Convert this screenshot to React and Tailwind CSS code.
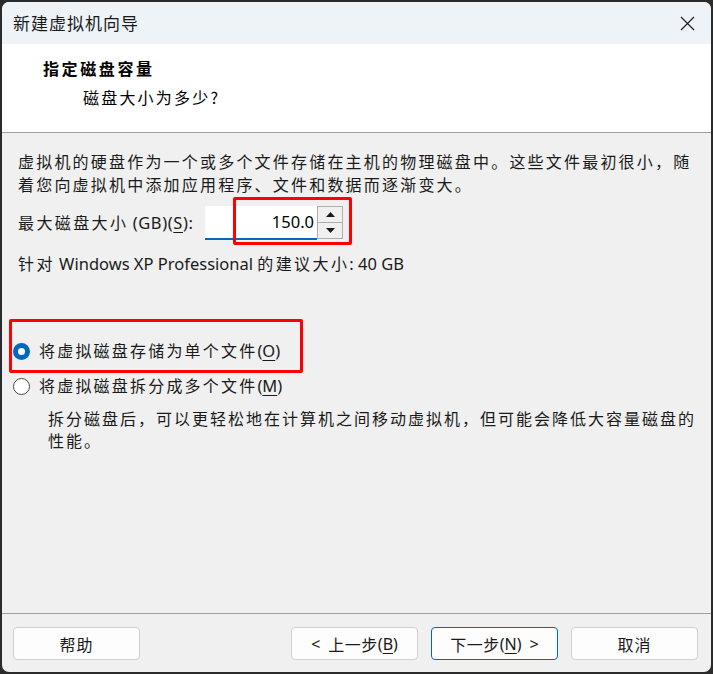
import React from "react";

const cjk = "font-['Noto_Sans_CJK_SC',sans-serif]";
const latin = "font-['Noto_Sans','Noto_Sans_CJK_SC',sans-serif]";

function Cjk({ children, className = "" }) {
  return <span className={`tracking-[2.4px] ${className}`}>{children}</span>;
}

function CloseIcon() {
  return (
    <svg width="15" height="15" viewBox="0 0 15 15" fill="none">
      <path d="M1 1L14 14M14 1L1 14" stroke="#1a1a1a" strokeWidth="1.1" />
    </svg>
  );
}

function Radio({ checked }) {
  if (checked) {
    return (
      <span className="w-[17px] h-[17px] rounded-full bg-[#0067c0] flex items-center justify-center shrink-0">
        <span className="w-[7px] h-[7px] rounded-full bg-white" />
      </span>
    );
  }
  return (
    <span className="w-[17px] h-[17px] rounded-full bg-white border border-[#4a4a4a] shrink-0" />
  );
}

function DialogButton({ children, primary }) {
  return (
    <button
      type="button"
      className={`w-[127px] h-[33px] rounded-[4px] bg-[#fdfdfd] border text-[16px] text-[#1a1a1a] flex items-center justify-center ${
        primary ? "border-[#0067c0]" : "border-[#d0d0d0]"
      }`}
    >
      {children}
    </button>
  );
}

export default function App() {
  return (
    <div className={`w-[713px] h-[674px] bg-[#2b2b2b] p-[2px] ${cjk}`}>
      <div className="h-full rounded-[7px] overflow-hidden flex flex-col bg-[#f0f0f0] text-[#1a1a1a]">
        {/* title bar */}
        <div className="h-[42px] bg-[#eef3f8] flex items-center justify-between pl-[11px] pr-[16px]">
          <span className="text-[17px] tracking-[1px]">新建虚拟机向导</span>
          <CloseIcon />
        </div>

        {/* header */}
        <div className="h-[89px] bg-white pl-[41px] pt-[12px] border-b border-[#a0a0a0]">
          <div className="text-[16px] leading-[24px] font-bold tracking-[2.6px] text-black">
            指定磁盘容量
          </div>
          <div className="mt-[5px] ml-[40px] text-[16px] leading-[24px] tracking-[2.2px] text-black">
            磁盘大小为多少?
          </div>
        </div>

        {/* body */}
        <div className="flex-1 px-[16px] pt-[17px] text-[16px] whitespace-nowrap">
          <p className="leading-[23px] tracking-[2.2px]">
            虚拟机的硬盘作为一个或多个文件存储在主机的物理磁盘中。这些文件最初很小，随
            <br />
            着您向虚拟机中添加应用程序、文件和数据而逐渐变大。
          </p>

          <div className="relative mt-[10px] flex items-center h-[34px]">
            <span className={`w-[187px] text-[16.5px] ${latin}`}>
              <Cjk className={`text-[16px] ${cjk}`}>最大磁盘大小</Cjk>{" "}
              <span className="tracking-[0.6px]">(GB)(<span className="underline underline-offset-[3px]">S</span>):</span>
            </span>
            <div className={`w-[112px] h-[34px] bg-white border-b-2 border-[#0067c0] flex items-center justify-end pr-[3px] text-black text-[16.5px] ${latin}`}>
              150.0
            </div>
            <div className="w-[26px] h-[33px] border border-[#adadad] bg-[#f0f0f0] flex flex-col self-start">
              <div className="flex-1 flex items-center justify-center border-b border-[#adadad]">
                <svg width="9" height="5" viewBox="0 0 9 5">
                  <path d="M0 5L4.5 0L9 5Z" fill="#1a1a1a" />
                </svg>
              </div>
              <div className="flex-1 flex items-center justify-center">
                <svg width="9" height="5" viewBox="0 0 9 5">
                  <path d="M0 0L4.5 5L9 0Z" fill="#1a1a1a" />
                </svg>
              </div>
            </div>
            <div className="absolute left-[215px] top-[-9px] w-[119px] h-[48px] border-[3px] border-[#ff0000] rounded-[2px] pointer-events-none" />
          </div>

          <p className={`mt-[12px] leading-[23px] text-[16.5px] ${latin}`}>
            <Cjk className={`text-[16px] ${cjk}`}>针对</Cjk> Windows XP Professional <Cjk className={`text-[16px] ${cjk}`}>的建议大小</Cjk>: 40 GB
          </p>

          <div className="relative mt-[64px] -ml-[7px] pl-[2px] flex items-center gap-[9px] h-[24px]">
            <Radio checked />
            <span className="tracking-[2.2px]">
              将虚拟磁盘存储为单个文件<span className={`text-[16.5px] tracking-normal ${latin}`}>(<span className="underline underline-offset-[3px]">O</span>)</span>
            </span>
            <div className="absolute left-[-2px] top-[-20px] w-[294px] h-[54px] border-[3px] border-[#ff0000] rounded-[2px] pointer-events-none" />
          </div>

          <div className="mt-[11px] -ml-[7px] pl-[2px] flex items-center gap-[9px] h-[24px]">
            <Radio />
            <span className="tracking-[2.2px]">
              将虚拟磁盘拆分成多个文件<span className={`text-[16.5px] tracking-normal ${latin}`}>(<span className="underline underline-offset-[3px]">M</span>)</span>
            </span>
          </div>

          <p className="mt-[9px] ml-[30px] leading-[22px] tracking-[2px]">
            拆分磁盘后，可以更轻松地在计算机之间移动虚拟机，但可能会降低大容量磁盘的
            <br />
            性能。
          </p>
        </div>

        {/* footer */}
        <div className="border-t border-[#a0a0a0] pt-[13px] pb-[12px] px-[11px] flex items-center">
          <DialogButton>
            <span className="tracking-[1px]">帮助</span>
          </DialogButton>
          <div className="ml-auto flex gap-[13px] pr-[2px]">
            <DialogButton>
              <span className={latin}>&lt;</span>
              <span className="ml-[8px] tracking-[0.5px]">上一步</span>
              <span className={latin}>(<span className="underline underline-offset-[3px]">B</span>)</span>
            </DialogButton>
            <DialogButton primary>
              <span className="tracking-[0.5px]">下一步</span>
              <span className={latin}>(<span className="underline underline-offset-[3px]">N</span>)</span>
              <span className={`ml-[8px] ${latin}`}>&gt;</span>
            </DialogButton>
            <DialogButton>
              <span className="tracking-[1px]">取消</span>
            </DialogButton>
          </div>
        </div>
      </div>
    </div>
  );
}
